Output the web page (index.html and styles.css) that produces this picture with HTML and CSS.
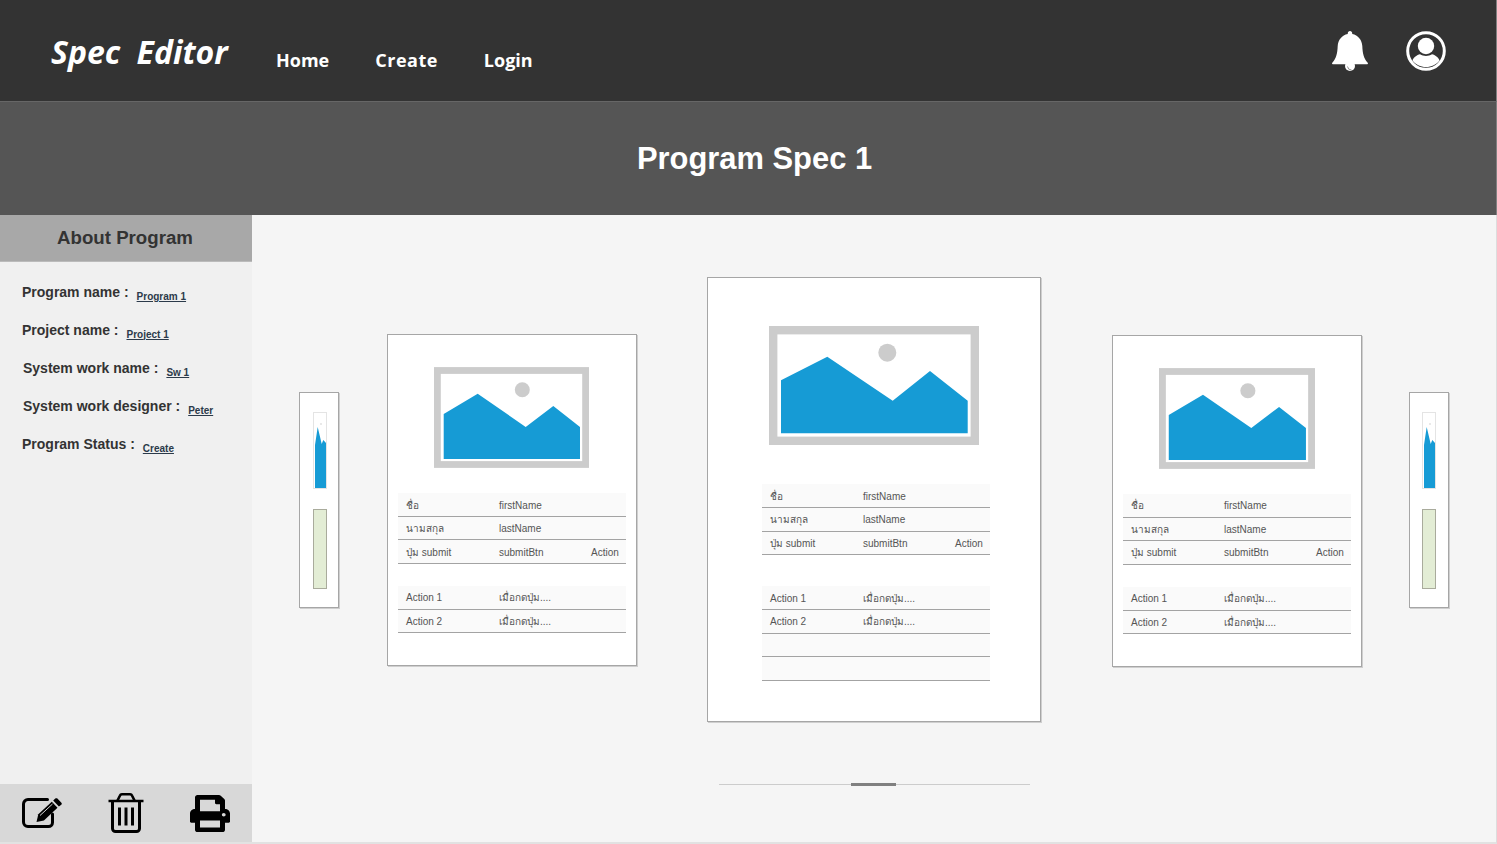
FILE: index.html
```html
<!DOCTYPE html>
<html lang="en">
<head>
<meta charset="utf-8">
<title>Spec Editor</title>
<link rel="stylesheet" href="styles.css">
</head>
<body>
<svg class="defs" width="0" height="0" aria-hidden="true">
  <symbol id="picture" viewBox="0 0 210 119" preserveAspectRatio="none">
    <rect x="4.2" y="4.2" width="201.6" height="110.6" fill="#fff" stroke="#ccc" stroke-width="8.4"/>
    <circle cx="118.3" cy="26.7" r="9" fill="#ccc"/>
    <polygon points="12,54.3 58.3,30.7 123.7,74.7 161,45 198.7,74.7 198.7,107.3 12,107.3" fill="#169bd5"/>
  </symbol>
  <symbol id="sidepicture" viewBox="0 0 155 101" preserveAspectRatio="none">
    <rect x="3.4" y="3.500" width="148.200" height="94" fill="#fff" stroke="#ccc" stroke-width="6.800"/>
    <circle cx="88.300" cy="22.700" r="7.500" fill="#ccc"/>
    <polygon points="9.700,47 43.700,26.700 91.700,60 119.300,39 146,60 146,92 9.700,92" fill="#169bd5"/>
  </symbol>
  <symbol id="minipicture" viewBox="0 0 14 77">
    <rect x=".5" y=".5" width="13" height="76" fill="#fff" stroke="#e4e4e4"/>
    <circle cx="8" cy="12" r=".8" fill="#ccc"/>
    <polygon points="2,33 4.7,15 8.7,32 10.3,28 13,31 13,76 2,76" fill="#169bd5"/>
  </symbol>
</svg>
<div class="page">
  <header class="topbar">
    <div class="brand">Spec Editor</div>
    <nav class="nav">
      <a class="nav-link">Home</a>
      <a class="nav-link nav-link-wide">Create</a>
      <a class="nav-link">Login</a>
    </nav>
    <div class="top-icons">
      <svg class="bell" viewBox="0 0 36 40">
        <circle cx="18" cy="35" r="5" fill="#fff"/>
        <path d="M19.500 39a4 4 0 0 1-4-3.500" fill="none" stroke="#777" stroke-width=".8"/>
        <path d="M18 0c1.300 0 2.200.9 2.300 2.900C26 4 30 8.800 30.300 15c.3 7.500 1.500 12.500 5.200 16.500.7.800.6 1.700-.3 1.700H.8c-.9 0-1-.9-.3-1.700C4.200 27.500 5.400 22.500 5.700 15 6 8.800 10 4 15.700 2.900 15.800.9 16.700 0 18 0z" fill="#fff"/>
      </svg>
      <svg class="user" viewBox="0 0 40 40">
        <circle cx="20" cy="20" r="18.300" fill="none" stroke="#fff" stroke-width="3"/>
        <circle cx="20" cy="15" r="8.200" fill="#fff"/>
        <path d="M6.500 29.500C7.500 26.500 11 23.800 14 23.300c3.500 2.300 8.500 2.300 12 0 3 .5 6.500 3.200 7.500 6.200C30.500 33.500 25.500 36 20 36S9.500 33.500 6.500 29.500z" fill="#fff"/>
      </svg>
    </div>
  </header>
  <div class="titleband"><h1 class="title">Program Spec 1</h1></div>
  <div class="body-row">
    <aside class="sidebar">
      <h2 class="side-head">About Program</h2>
      <dl class="info">
        <div class="info-row"><dt>Program name :</dt><dd>Program 1</dd></div>
        <div class="info-row"><dt>Project name :</dt><dd>Project 1</dd></div>
        <div class="info-row info-row-shift"><dt>System work name :</dt><dd>Sw 1</dd></div>
        <div class="info-row info-row-shift"><dt>System work designer :</dt><dd>Peter</dd></div>
        <div class="info-row"><dt>Program Status :</dt><dd>Create</dd></div>
      </dl>
      <div class="side-tools">
        <svg class="tool-edit" viewBox="0 0 40 30">
          <path d="M25.500 1.500H6A4.500 4.500 0 0 0 1.500 6v18A4.500 4.500 0 0 0 6 28.500h20.500a4 4 0 0 0 4-4V16" fill="none" stroke="#000" stroke-width="3" stroke-linecap="round"/>
          <path d="M16.300 16.300 29.800 3.800l5.700 6L21.900 22.600l-7.400 1.400z" fill="#000"/>
          <path d="M31.200 2.500 33.300.6c.6-.6 1.500-.6 2.100 0l4 4.100c.6.600.5 1.500-.1 2.100l-2.400 1.700z" fill="#000"/>
          <path d="M18 17.500 30.500 6" stroke="#d8d8d8" stroke-width="1" fill="none"/>
        </svg>
        <svg class="tool-trash" viewBox="0 0 36 40">
          <path d="M.5 8h35" stroke="#000" stroke-width="2.600" fill="none"/>
          <path d="M9.500 7.500 12 2.500c.3-.7.9-1.200 1.800-1.200h8.400c.9 0 1.500.5 1.800 1.200l2.500 5" stroke="#000" stroke-width="2.600" fill="none"/>
          <path d="M4.500 8v27.500a3 3 0 0 0 3 3h21a3 3 0 0 0 3-3V8" stroke="#000" stroke-width="3" fill="none"/>
          <path d="M11.500 14.500v18M18 14.500v18M24.500 14.500v18" stroke="#000" stroke-width="3" fill="none"/>
        </svg>
        <svg class="tool-print" viewBox="0 0 512 512" preserveAspectRatio="none">
          <path d="M448 192V77.250c0-8.490-3.370-16.620-9.370-22.630L393.370 9.370c-6-6-14.140-9.370-22.630-9.370H96C78.330 0 64 14.330 64 32v160c-35.350 0-64 28.650-64 64v112c0 8.840 7.160 16 16 16h48v96c0 17.670 14.330 32 32 32h320c17.670 0 32-14.330 32-32v-96h48c8.840 0 16-7.160 16-16V256c0-35.350-28.650-64-64-64zm-64 256H128v-96h256v96zm0-224H128V64h192v48c0 8.840 7.160 16 16 16h48v96zm48 72c-13.250 0-24-10.750-24-24 0-13.260 10.750-24 24-24s24 10.740 24 24c0 13.250-10.750 24-24 24z" fill="#000"/>
        </svg>
      </div>
    </aside>
    <main class="main">
      <div class="carousel">
        <div class="card-mini card-mini-left">
          <svg class="mini-pic"><use href="#minipicture"/></svg>
          <div class="mini-green"></div>
        </div>
        <section class="card card-side card-left">
          <svg class="pic pic-side"><use href="#sidepicture"/></svg>
          <table class="spec spec-first">
            <tr><td>ชื่อ</td><td>firstName</td><td></td></tr>
            <tr><td>นามสกุล</td><td>lastName</td><td></td></tr>
            <tr><td>ปุ่ม submit</td><td>submitBtn</td><td>Action</td></tr>
          </table>
          <table class="spec spec-second">
            <tr><td>Action 1</td><td>เมื่อกดปุ่ม....</td><td></td></tr>
            <tr><td>Action 2</td><td>เมื่อกดปุ่ม....</td><td></td></tr>
          </table>
        </section>
        <section class="card card-center">
          <svg class="pic pic-center"><use href="#picture"/></svg>
          <table class="spec spec-first">
            <tr><td>ชื่อ</td><td>firstName</td><td></td></tr>
            <tr><td>นามสกุล</td><td>lastName</td><td></td></tr>
            <tr><td>ปุ่ม submit</td><td>submitBtn</td><td>Action</td></tr>
          </table>
          <table class="spec spec-second">
            <tr><td>Action 1</td><td>เมื่อกดปุ่ม....</td><td></td></tr>
            <tr><td>Action 2</td><td>เมื่อกดปุ่ม....</td><td></td></tr>
            <tr><td></td><td></td><td></td></tr>
            <tr><td></td><td></td><td></td></tr>
          </table>
        </section>
        <section class="card card-side card-right">
          <svg class="pic pic-side"><use href="#sidepicture"/></svg>
          <table class="spec spec-first">
            <tr><td>ชื่อ</td><td>firstName</td><td></td></tr>
            <tr><td>นามสกุล</td><td>lastName</td><td></td></tr>
            <tr><td>ปุ่ม submit</td><td>submitBtn</td><td>Action</td></tr>
          </table>
          <table class="spec spec-second">
            <tr><td>Action 1</td><td>เมื่อกดปุ่ม....</td><td></td></tr>
            <tr><td>Action 2</td><td>เมื่อกดปุ่ม....</td><td></td></tr>
          </table>
        </section>
        <div class="card-mini card-mini-right">
          <svg class="mini-pic"><use href="#minipicture"/></svg>
          <div class="mini-green"></div>
        </div>
      </div>
      <div class="scroller"><div class="scroller-thumb"></div></div>
    </main>
  </div>
</div>
</body>
</html>
```
FILE: styles.css
```css
* { box-sizing: border-box; }
html, body { margin: 0; height: 100%; }
body { background: #fff; font-family: "Liberation Sans", Arial, sans-serif; overflow: hidden; }
.defs { position: absolute; }
.page { width: 1497px; height: 844px; display: flex; flex-direction: column; }

.topbar { height: 102px; flex: none; background: #333; display: flex; align-items: flex-start; padding-left: 51px; border-bottom: 1px solid #666; border-right: 1px solid #808080; }
.brand { font-family: "Open Sans", sans-serif; font-style: italic; font-weight: 700; font-size: 32px; line-height: 40px; word-spacing: 8px; color: #fff; margin-top: 32px; width: 225px; white-space: nowrap; }
.nav { display: flex; gap: 46px; margin-top: 46px; }
.nav-link { font-family: "Open Sans", sans-serif; font-weight: 700; font-size: 18px; line-height: 28px; color: #fff; }
.nav-link-wide { letter-spacing: .5px; }
.top-icons { margin-left: auto; display: flex; align-items: flex-start; gap: 38px; margin-top: 31px; padding-right: 50px; }
.bell { width: 36px; height: 40px; display: block; }
.user { width: 40px; height: 40px; display: block; }

.titleband { height: 113px; flex: none; background: #555; display: flex; align-items: center; justify-content: center; padding-left: 13px; border-right: 1px solid #808080; }
.title { margin: 0; font-size: 30.900px; font-weight: 700; color: #fff; }

.body-row { flex: 1; display: flex; min-height: 0; border-bottom: 2px solid #e2e2e2; border-right: 1px solid #ddd; }
.sidebar { width: 252px; flex: none; background: #f0f0f0; display: flex; flex-direction: column; }
.side-head { margin: 0; height: 47px; background: #a8a8a8; font-size: 18.670px; font-weight: 700; color: #333; display: flex; align-items: center; justify-content: center; padding-right: 2px; border-bottom: 1px solid #bbb; }
.info { margin: 0; padding: 20px 0 0 22px; display: flex; flex-direction: column; gap: 18px; flex: 1; }
.info-row { display: flex; align-items: flex-end; gap: 8px; height: 20px; }
.info-row-shift { padding-left: 1px; }
.info-row dt { font-size: 14px; font-weight: 700; color: #333; line-height: 20px; }
.info-row dd { margin: 0 0 -1.500px; font-size: 10px; font-weight: 700; color: #2b3a4a; text-decoration: underline; line-height: 14px; }
.side-tools { height: 58px; background: #d8d8d8; display: flex; align-items: flex-start; padding: 9px 0 0 22px; }
.tool-edit { width: 40px; height: 30px; margin-top: 5px; }
.tool-trash { width: 36px; height: 40px; margin-left: 46px; }
.tool-print { width: 40px; height: 37px; margin-left: 46px; margin-top: 2px; }

.main { flex: 1; background: #f5f5f5; display: flex; flex-direction: column; align-items: center; padding-top: 62px; }
.carousel { display: flex; align-items: center; justify-content: center; }

.card { background: #fff; border: 1px solid #a6a6a6; box-shadow: 1px 1px 0 #cfcfcf; display: flex; flex-direction: column; align-items: center; }
.card-side { width: 250px; height: 332px; padding-top: 32px; }
.card-left { margin-left: 48px; margin-right: 70px; }
.card-right { margin-left: 71px; margin-right: 47px; margin-top: 2px; }
.card-center { width: 334px; height: 445px; padding-top: 48px; }

.pic { display: block; flex: none; }
.pic-side { width: 155px; height: 101px; }
.card-left .pic-side { margin-left: -1px; }
.card-right .pic-side { width: 156px; }
.pic-center { width: 210px; height: 119px; }

.spec { width: 228px; table-layout: fixed; border-collapse: collapse; font-size: 10px; color: #555; flex: none; }
.spec td { height: 23.500px; padding: 1px 0 0 8px; background: #fafafa; border-bottom: 1px solid #a3a3a3; white-space: nowrap; overflow: hidden; }
.spec td:nth-child(1), .spec td:nth-child(2) { width: 93px; }
.spec td:nth-child(3) { padding-left: 7px; }
.spec-first { margin-top: 25px; }
.spec-second { margin-top: 22px; }
.card-left .spec-first td { padding-top: 2px; }
.card-center .spec { margin-left: 4px; }
.card-center .spec-first { margin-top: 39px; }
.card-center .spec-second { margin-top: 31px; }

.card-mini { width: 40px; height: 216px; background: #fff; border: 1px solid #a6a6a6; box-shadow: 1px 1px 0 #cfcfcf; display: flex; flex-direction: column; align-items: center; padding-top: 19px; gap: 20px; }
.card-mini-left { padding-left: 2px; }
.mini-pic { width: 14px; height: 77px; display: block; flex: none; }
.mini-green { width: 14px; height: 80px; background: #e3edd5; border: 1px solid #a9ab9c; flex: none; }

.scroller { width: 311px; height: 1px; background: #ccc; margin-top: 62px; position: relative; flex: none; }
.scroller-thumb { position: absolute; left: 132px; top: -1px; width: 45px; height: 3px; background: #808080; }
```
